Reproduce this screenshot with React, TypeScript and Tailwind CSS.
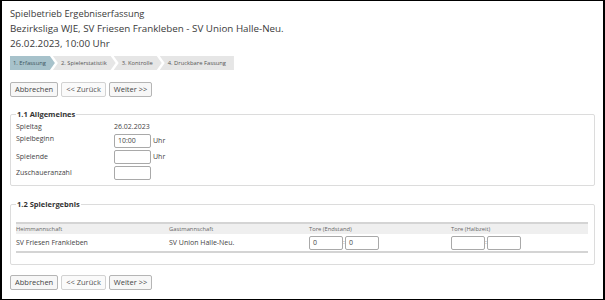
import type { ReactNode } from "react";

const steps = ["1. Erfassung", "2. Spielerstatistik", "3. Kontrolle", "4. Druckbare Fassung"];

function ActionButtons() {
  return (
    <div className="flex gap-[3px]">
      <button className="h-[15px] rounded-[2px] border border-[#b5b5b5] bg-[#f7f7f7] px-[4px] text-[7.5px] leading-none text-[#444]" type="button">
        Abbrechen
      </button>
      <button className="h-[15px] rounded-[2px] border border-[#d2d2d2] bg-[#fafafa] px-[4px] text-[7.5px] leading-none text-[#555]" type="button">
        &lt;&lt; Zurück
      </button>
      <button className="h-[15px] rounded-[2px] border border-[#b5b5b5] bg-[#f7f7f7] px-[4px] text-[7.5px] leading-none text-[#444]" type="button">
        Weiter &gt;&gt;
      </button>
    </div>
  );
}

function Box({ value = "", className = "w-[37px]" }: { value?: string; className?: string }) {
  return (
    <div className={`flex h-[14px] items-center rounded-[2px] border border-[#a9a9a9] bg-white px-[3px] text-[7px] text-[#444] ${className}`}>
      {value}
    </div>
  );
}

function Section({ title, children, className }: { title: string; children: ReactNode; className: string }) {
  return (
    <fieldset className={`mx-[8px] rounded-[2px] border border-[#dcdcdc] px-[5px] ${className}`}>
      <legend className="px-[1px] text-[7.5px] font-bold text-[#333]">{title}</legend>
      {children}
    </fieldset>
  );
}

export default function App() {
  return (
    <div className="h-[300px] w-[605px] overflow-hidden bg-black pb-[1px] pl-[2px] pr-[2px] pt-[1px] font-['Open_Sans',sans-serif]">
      <div className="flex h-full flex-col bg-white">
        <div className="ml-[8px] mt-[5px] text-[9.3px] leading-[15px] text-[#3a3a3a]">
          <div>Spielbetrieb Ergebniserfassung</div>
          <div className="text-[9.8px]">Bezirksliga WJE, SV Friesen Frankleben - SV Union Halle-Neu.</div>
          <div className="text-[9.8px]">26.02.2023, 10:00 Uhr</div>
        </div>

        <div className="ml-[8px] mt-[5px] flex h-[14px] gap-[1px]">
          {steps.map((step, i) => (
            <div
              key={step}
              className={
                i === 0
                  ? "flex items-center bg-[#a7c2cb] pl-[3px] pr-[9px] text-[5.8px] text-[#3d5560] [clip-path:polygon(0_0,calc(100%-5px)_0,100%_50%,calc(100%-5px)_100%,0_100%)]"
                  : i === 3
                    ? "-ml-[3px] flex items-center bg-[#e6e6e6] pl-[8px] pr-[8px] text-[5.8px] text-[#555] [clip-path:polygon(0_0,100%_0,100%_100%,0_100%,5px_50%)]"
                    : "-ml-[3px] flex items-center bg-[#e6e6e6] pl-[8px] pr-[9px] text-[5.8px] text-[#555] [clip-path:polygon(0_0,calc(100%-5px)_0,100%_50%,calc(100%-5px)_100%,0_100%,5px_50%)]"
              }
            >
              {step}
            </div>
          ))}
        </div>

        <div className="ml-[8px] mt-[12px]">
          <ActionButtons />
        </div>

        <Section title="1.1 Allgemeines" className="mt-[12px] h-[77px] pt-[1px]">
          <div className="grid grid-cols-[98px_1fr] items-center gap-y-[2px] text-[7px] text-[#444]">
            <div className="h-[11px] leading-[11px]">Spieltag</div>
            <div className="h-[11px] leading-[11px]">26.02.2023</div>
            <div className="self-start leading-[10px]">Spielbeginn</div>
            <div className="flex items-center gap-[2px]">
              <Box value="10:00" />
              <span>Uhr</span>
            </div>
            <div>Spielende</div>
            <div className="flex items-center gap-[2px]">
              <Box />
              <span>Uhr</span>
            </div>
            <div>Zuschaueranzahl</div>
            <div className="flex items-center">
              <Box />
            </div>
          </div>
        </Section>

        <Section title="1.2 Spielergebnis" className="mt-[13px] h-[66px] pt-[12px]">
          <div className="mr-[1px] border-b-2 border-t-2 border-[#d4d4d4] text-[#444]">
            <div className="grid h-[10px] grid-cols-[153px_140px_142px_1fr] items-center bg-[#efefef] text-[5.8px] text-[#666]">
              <div>Heimmannschaft</div>
              <div>Gastmannschaft</div>
              <div>Tore (Endstand)</div>
              <div>Tore (Halbzeit)</div>
            </div>
            <div className="grid h-[17px] grid-cols-[153px_140px_142px_1fr] items-center text-[7px]">
              <div>SV Friesen Frankleben</div>
              <div>SV Union Halle-Neu.</div>
              <div className="flex items-center">
                <Box value="0" className="w-[34px]" />
                <span className="w-[2px] text-center text-[5px] leading-none">:</span>
                <Box value="0" className="w-[34px]" />
              </div>
              <div className="flex items-center">
                <Box className="w-[34px]" />
                <span className="w-[2px] text-center text-[5px] leading-none">:</span>
                <Box className="w-[34px]" />
              </div>
            </div>
          </div>
        </Section>

        <div className="ml-[8px] mt-[10px]">
          <ActionButtons />
        </div>
      </div>
    </div>
  );
}
